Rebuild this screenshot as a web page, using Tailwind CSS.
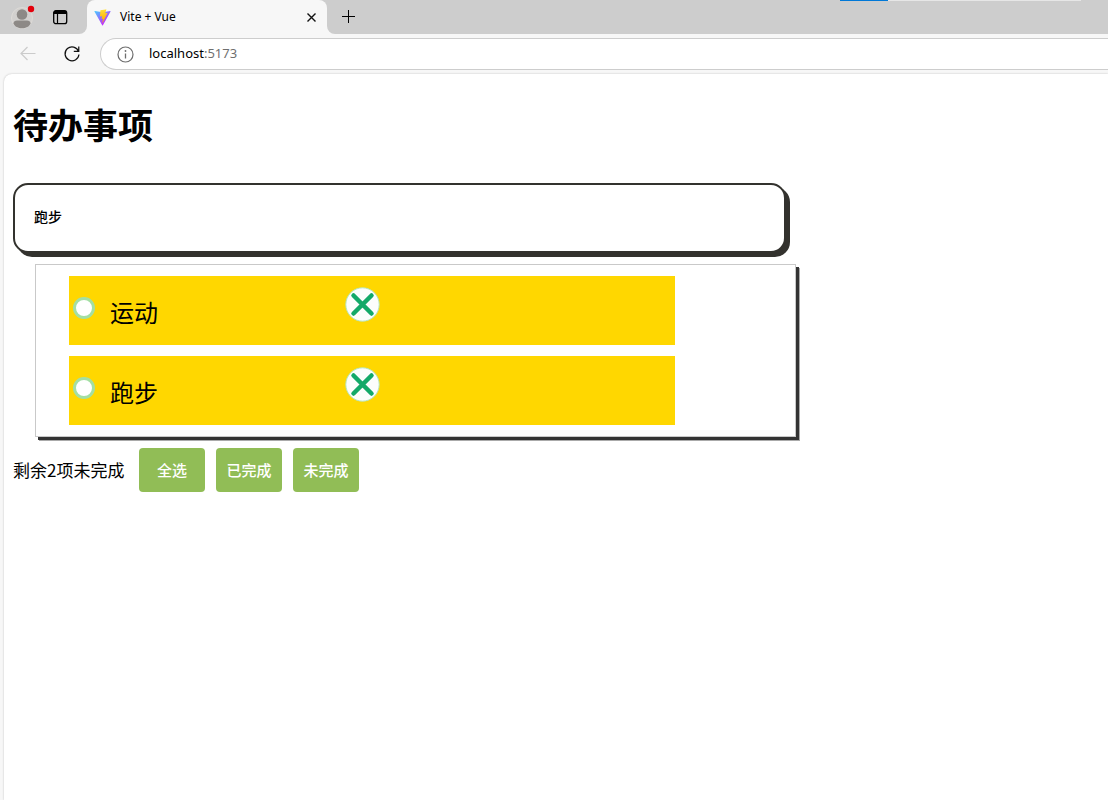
<!DOCTYPE html>
<html lang="zh-CN">
<head>
<meta charset="utf-8">
<meta name="viewport" content="width=device-width, initial-scale=1">
<title>Vite + Vue</title>
<script src="https://cdn.jsdelivr.net/npm/@tailwindcss/browser@4"></script>
</head>
<body class="flex min-h-screen flex-col bg-[#f7f7f7] font-['Noto_Sans_CJK_SC',sans-serif] text-black">
<header class="font-['Noto_Sans',sans-serif]">
  <div class="relative flex h-[34px] bg-[#f7f7f7]">
    <div class="flex w-[87px] items-center gap-4 rounded-br-lg bg-[#cdcdcd] pl-[11px]">
      <button aria-label="个人资料" class="block">
        <svg class="block" width="25" height="26" viewBox="0 0 25 26"><circle cx="11" cy="14" r="10.5" fill="#d2d0ce" stroke="#dedbd8"/><circle cx="11" cy="10.500" r="5.300" fill="#8d8986"/><path d="M2.500 19.500C2.500 17.500 4 16.500 6 16.500H16C18 16.500 19.500 17.500 19.500 19.500C17.500 25.800 4.500 25.800 2.500 19.500Z" fill="#8d8986"/><circle cx="20" cy="5" r="3.200" fill="#e3000b"/></svg>
      </button>
      <button aria-label="标签页操作" class="block">
        <svg class="block" width="16" height="16" viewBox="0 0 16 16"><rect x="1.700" y="1.700" width="13" height="13" rx="2.300" fill="none" stroke="#000" stroke-width="1.300"/><path d="M1.500 5V3.500Q1.500 1.500 3.500 1.500H12.500Q14.500 1.500 14.500 3.500V5Z"/><path d="M5.500 5V14.500" stroke="#000" stroke-width="1.200"/></svg>
      </button>
    </div>
    <div class="bg-[#cdcdcd]">
      <div class="flex h-full w-60 items-center rounded-t-lg bg-[#f7f7f7] pl-[7px] pr-[10px]">
        <svg class="mr-[9px]" width="17" height="17" viewBox="0 0 410 404"><defs><linearGradient id="va" x1="6" y1="33" x2="235" y2="344" gradientUnits="userSpaceOnUse"><stop stop-color="#41d1ff"/><stop offset="1" stop-color="#bd34fe"/></linearGradient><linearGradient id="vb" x1="195" y1="9" x2="236" y2="293" gradientUnits="userSpaceOnUse"><stop stop-color="#ffea83"/><stop offset=".08" stop-color="#ffdd35"/><stop offset="1" stop-color="#ffa800"/></linearGradient></defs><path d="M399.600 59.500 215.600 388.500C211.800 395.300 202.100 395.400 198.200 388.600L10.600 59.600C6.300 52.100 12.700 43 21.200 44.500L205.300 77.400C206.500 77.600 207.700 77.600 208.900 77.400L389.100 44.500C397.500 43 404 52 399.600 59.500Z" fill="url(#va)"/><path d="M292.900 1.600 156.800 28.200C154.500 28.700 152.800 30.600 152.700 32.900L144.300 174.300C144.100 177.700 147.200 180.300 150.400 179.500L188.300 170.800C191.900 170 195.100 173.100 194.300 176.700L183.100 231.800C182.300 235.500 185.800 238.700 189.400 237.600L212.800 230.400C216.500 229.300 219.900 232.500 219.100 236.200L201.200 322.900C200.100 328.300 207.300 331.300 210.300 326.600L212.300 323.500L323.200 102.200C325.100 98.500 321.900 94.200 317.800 95L278.800 102.500C275.100 103.200 272 99.800 273 96.200L298.500 8C299.500 4.300 296.400 .9 292.900 1.600Z" fill="url(#vb)"/></svg>
        <span class="flex-1 text-xs">Vite + Vue</span>
        <button aria-label="关闭标签页"><svg class="block" width="11" height="11" viewBox="0 0 11 11"><path d="M1.500 1.500 9.500 9.500M9.500 1.500 1.500 9.500" stroke="#111" stroke-width="1.400"/></svg></button>
      </div>
    </div>
    <div class="flex flex-1 items-center rounded-bl-lg bg-[#cdcdcd] pl-[14px]">
      <button aria-label="新建标签页"><svg class="block" width="15" height="15" viewBox="0 0 15 15"><path d="M1 6.500H14M7.500 0V13" stroke="#000" stroke-width="1"/></svg></button>
    </div>
    <div class="absolute top-0 right-[27px] flex h-px w-[241px] bg-[#e6e6e6]"><span class="w-12 bg-[#0078d7]"></span></div>
  </div>
  <div class="flex h-10 items-center">
    <button aria-label="后退" class="ml-5"><svg class="block" width="16" height="16" viewBox="0 0 16 16"><path d="M15.500 7.500H1M7.500 1 1 7.500 7.500 14" fill="none" stroke="#cbcbcb" stroke-width="1.200"/></svg></button>
    <button aria-label="刷新" class="ml-7"><svg class="block" width="16" height="18" viewBox="0 0 17 18"><path d="M15.500 6.300A7.400 7.400 0 1 0 15.900 9.500M15.700 1V6.300H10.400" fill="none" stroke="#111" stroke-width="1.300"/></svg></button>
    <label class="ml-5 flex h-8 flex-1 items-center rounded-l-full border border-r-0 border-[#cdcdcd] bg-white pl-4">
      <svg width="17" height="17" viewBox="0 0 17 17"><circle cx="8.500" cy="8.500" r="7.500" fill="none" stroke="#6e6e6e" stroke-width="1.200"/><path d="M8.500 7.500V12.500" stroke="#6e6e6e" stroke-width="1.300"/><circle cx="8.500" cy="5" r=".9" fill="#6e6e6e"/></svg>
      <a href="#" class="ml-[15px] text-[13px]">localhost<span class="text-[#6f6f6f]">:5173</span></a>
    </label>
  </div>
</header>
<main class="ml-1 flex-1 rounded-tl-lg bg-white pl-[9px] shadow-[0_0_2px_#bbb]">
  <h1 class="pt-6 text-[35px] leading-[52px] font-bold">待办事项</h1>
  <input aria-label="新的待办" value="跑步" class="mt-[33px] block h-[70px] w-full max-w-[773px] rounded-[15px] border-2 border-[#33322e] bg-white px-[19px] pb-1 text-sm font-medium outline-none shadow-[4px_4px_0_#33322e]">
  <ul class="mt-[11px] ml-[22px] flex max-w-[761px] flex-col gap-[11px] border border-[#c9c9c9] bg-white py-[11px] pr-[120px] pl-[33px] shadow-[3px_3px_0_#333,4px_4px_0_#aaa]">
    <li class="grid h-[69px] grid-cols-[276px_1fr] items-start bg-[#ffd700]">
      <label class="flex items-start pl-1"><input type="checkbox" class="mt-[21px] size-[22px] appearance-none rounded-full border-[3px] border-[#a3dfa3] bg-white"><span class="mt-[18px] ml-[15px] text-2xl leading-9">运动</span></label>
      <button aria-label="删除运动" class="mt-[11px] size-[35px]"><svg class="block" viewBox="0 0 35 35"><circle cx="17.500" cy="17.500" r="16.700" fill="#fcfdfc" stroke="#b4e6bd" stroke-width="1"/><path d="M8.500 8.500 26.500 26.500M26.500 8.500 8.500 26.500" stroke="#13a968" stroke-width="4.500" stroke-linecap="round"/></svg></button>
    </li>
    <li class="grid h-[69px] grid-cols-[276px_1fr] items-start bg-[#ffd700]">
      <label class="flex items-start pl-1"><input type="checkbox" class="mt-[21px] size-[22px] appearance-none rounded-full border-[3px] border-[#a3dfa3] bg-white"><span class="mt-[18px] ml-[15px] text-2xl leading-9">跑步</span></label>
      <button aria-label="删除跑步" class="mt-[11px] size-[35px]"><svg class="block" viewBox="0 0 35 35"><circle cx="17.500" cy="17.500" r="16.700" fill="#fcfdfc" stroke="#b4e6bd" stroke-width="1"/><path d="M8.500 8.500 26.500 26.500M26.500 8.500 8.500 26.500" stroke="#13a968" stroke-width="4.500" stroke-linecap="round"/></svg></button>
    </li>
  </ul>
  <div class="mt-[11px] flex items-center gap-[11px]">
    <span class="min-w-[115px] text-[17px]">剩余2项未完成</span>
    <button class="h-11 w-[66px] rounded-sm bg-[#91bd56] text-[15px] font-medium text-white">全选</button>
    <button class="h-11 w-[66px] rounded-sm bg-[#91bd56] text-[15px] font-medium text-white">已完成</button>
    <button class="h-11 w-[66px] rounded-sm bg-[#91bd56] text-[15px] font-medium text-white">未完成</button>
  </div>
</main>
</body>
</html>
